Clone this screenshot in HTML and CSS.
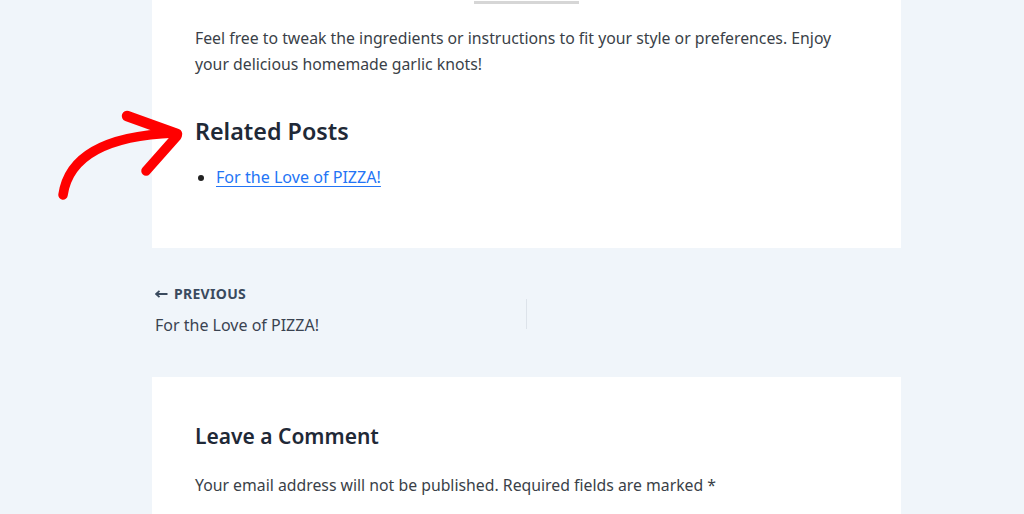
FILE: index.html
```html
<!DOCTYPE html>
<html lang="en">
<head>
<meta charset="utf-8">
<title>Garlic Knots</title>
<link rel="stylesheet" href="styles.css">
</head>
<body>
<div class="page">
  <article class="card card-top">
    <div class="sep"></div>
    <p class="text">Feel free to tweak the ingredients or instructions to fit your style or preferences. Enjoy your delicious homemade garlic knots!</p>
    <h2 class="related-title">Related Posts</h2>
    <ul class="related-list">
      <li><a href="#" class="related-link">For the Love of PIZZA!</a></li>
    </ul>
  </article>

  <nav class="post-nav">
    <div class="nav-prev">
      <div class="nav-label"><svg class="nav-arrow" width="13" height="8" viewBox="0 0 13 8"><path d="M1 4 H12.5 M4.5 0.8 L1 4 L4.5 7.2" fill="none" stroke="currentColor" stroke-width="1.8"/></svg>PREVIOUS</div>
      <div class="nav-title">For the Love of PIZZA!</div>
    </div>
    <div class="nav-divider"></div>
    <div class="nav-next"></div>
  </nav>

  <section class="card card-comment">
    <h3 class="comment-title">Leave a Comment</h3>
    <p class="comment-note">Your email address will not be published. Required fields are marked *</p>
  </section>
</div>

<svg class="hand-arrow" width="140" height="100" viewBox="50 105 140 100">
  <path d="M63 195 C 68 160, 100 136, 174 133" fill="none" stroke="#ff0000" stroke-width="9.5" stroke-linecap="round"/>
  <path d="M127 116 L177 134" fill="none" stroke="#ff0000" stroke-width="10.5" stroke-linecap="round"/>
  <path d="M177 136 L146 171" fill="none" stroke="#ff0000" stroke-width="9.5" stroke-linecap="round"/>
</svg>
</body>
</html>
```

FILE: styles.css
```css
html, body {
  margin: 0;
  padding: 0;
}
body {
  background: #f0f5fa;
  font-family: "Noto Sans", "Open Sans", sans-serif;
  color: #3a4351;
  overflow: hidden;
  height: 514px;
  position: relative;
}
.page {
  width: 749px;
  margin-left: 152px;
}
.card {
  background: #ffffff;
  padding: 0 43px;
}
.card-top {
  padding-top: 1px;
  padding-bottom: 58px;
}
.sep {
  width: 105px;
  height: 3px;
  background: #d6d6d6;
  margin: 0 auto;
}
.text {
  margin: 21px 0 0;
  font-size: 15.8px;
  line-height: 26px;
  color: #3a3f48;
}
.related-title {
  margin: 39px 0 0;
  font-size: 23.3px;
  line-height: 31px;
  font-weight: 600;
  color: #1f2937;
}
.related-list {
  margin: 17px 0 0;
  padding-left: 21px;
  font-size: 16.1px;
  line-height: 26px;
}
.related-list li::marker {
  color: #222;
}
.related-link {
  color: #2374f5;
  text-decoration: underline;
  text-underline-offset: 3px;
}
.post-nav {
  display: flex;
  height: 129px;
}
.nav-prev {
  box-sizing: border-box;
  width: 374px;
  padding: 36px 0 0 3px;
}
.nav-label {
  display: flex;
  align-items: center;
  gap: 6px;
  font-size: 14px;
  line-height: 20px;
  font-weight: 700;
  letter-spacing: 0.3px;
  color: #3a4a5e;
}
.nav-arrow {
  display: block;
}
.nav-title {
  margin-top: 9px;
  font-size: 16px;
  line-height: 24px;
  color: #3a4351;
}
.nav-divider {
  width: 1px;
  height: 30px;
  margin-top: 51px;
  background: #dde3ea;
}
.nav-next {
  flex: 1;
}
.card-comment {
  padding-top: 44px;
  padding-bottom: 40px;
}
.comment-title {
  margin: 0;
  font-size: 21px;
  line-height: 30px;
  font-weight: 600;
  color: #1f2937;
}
.comment-note {
  margin: 21px 0 0;
  font-size: 15.8px;
  line-height: 26px;
  color: #3a3f48;
}
.hand-arrow {
  position: absolute;
  left: 50px;
  top: 105px;
}
```
